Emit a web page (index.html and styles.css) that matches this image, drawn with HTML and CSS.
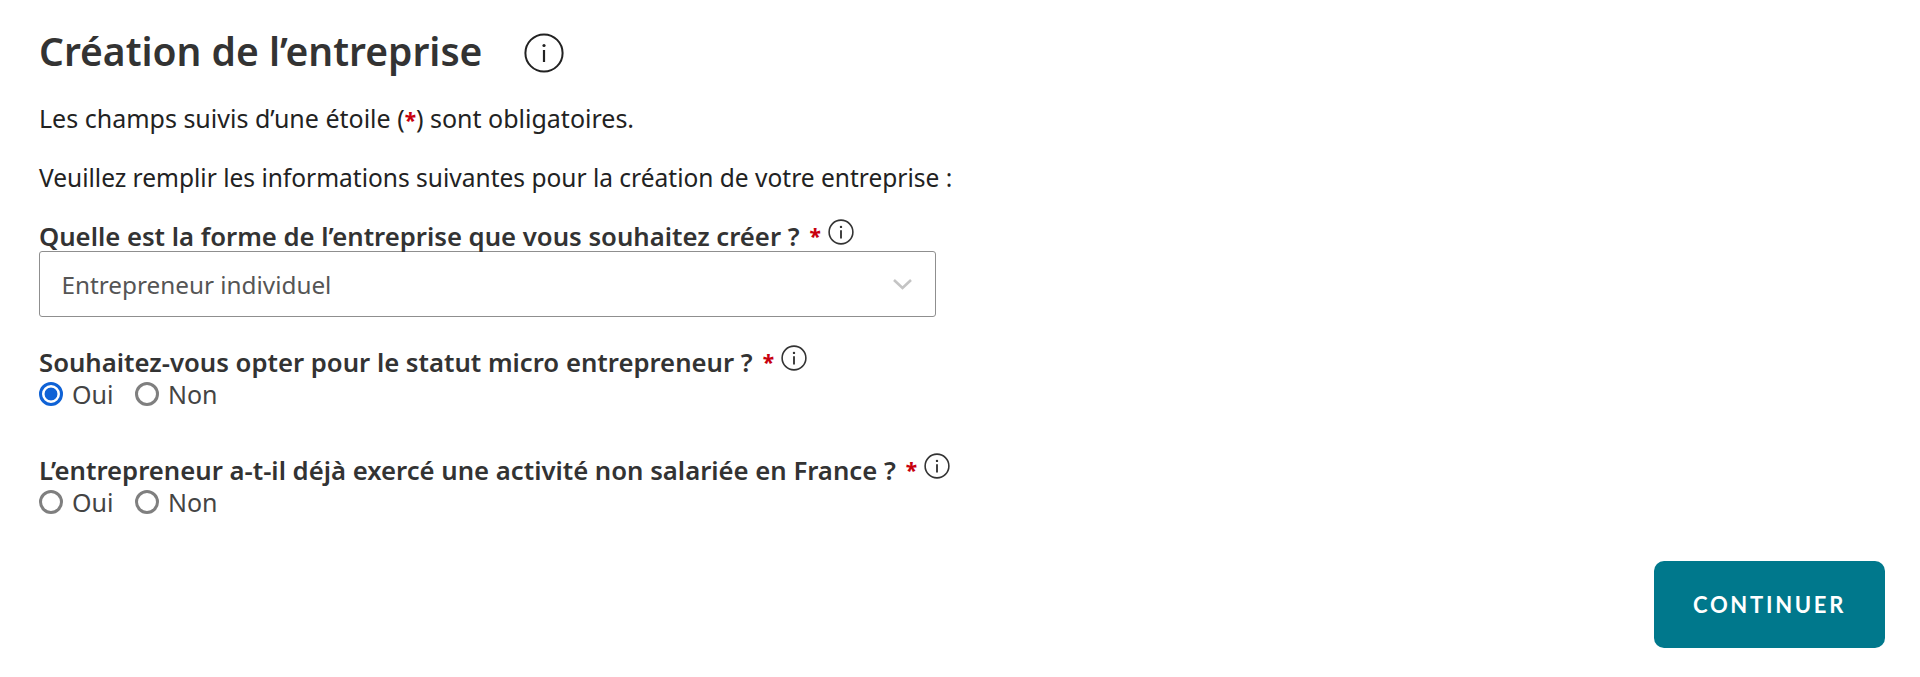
FILE: index.html
```html
<!DOCTYPE html>
<html lang="fr">
<head>
<meta charset="utf-8">
<title>Création de l’entreprise</title>
<link rel="stylesheet" href="styles.css">
</head>
<body>
<main class="page">
  <div class="title-row">
    <h1 class="title">Création de l’entreprise</h1>
    <svg class="info info-lg" viewBox="0 0 40 40" aria-hidden="true"><circle cx="20" cy="20" r="18.6" fill="none" stroke="#222" stroke-width="2"/><path d="M20 17v12" stroke="#222" stroke-width="2.2" fill="none"/><circle cx="20" cy="12.5" r="1.6" fill="#222"/></svg>
  </div>
  <p class="text first">Les champs suivis d’une étoile (<span class="req">*</span>) sont obligatoires.</p>
  <p class="text second">Veuillez remplir les informations suivantes pour la création de votre entreprise :</p>

  <section class="field q1">
    <div class="label-row"><span class="label">Quelle est la forme de l’entreprise que vous souhaitez créer ?</span><span class="req">*</span>
      <svg class="info info-sm" viewBox="0 0 28 28" aria-hidden="true"><circle cx="14" cy="14" r="12.8" fill="none" stroke="#333" stroke-width="1.7"/><path d="M14 12v9" stroke="#333" stroke-width="2" fill="none"/><circle cx="14" cy="8.5" r="1.3" fill="#333"/></svg>
    </div>
    <div class="select"><span>Entrepreneur individuel</span>
      <svg class="chevron" viewBox="0 0 20 12" aria-hidden="true"><path d="M1.5 2l8.5 8 8.5-8" fill="none" stroke="#c4c4c4" stroke-width="2.6"/></svg>
    </div>
  </section>

  <section class="field q2">
    <div class="label-row"><span class="label">Souhaitez-vous opter pour le statut micro entrepreneur ?</span><span class="req">*</span>
      <svg class="info info-sm" viewBox="0 0 28 28" aria-hidden="true"><circle cx="14" cy="14" r="12.8" fill="none" stroke="#333" stroke-width="1.7"/><path d="M14 12v9" stroke="#333" stroke-width="2" fill="none"/><circle cx="14" cy="8.5" r="1.3" fill="#333"/></svg>
    </div>
    <div class="radios">
      <label class="radio"><span class="dot on"></span>Oui</label>
      <label class="radio"><span class="dot"></span>Non</label>
    </div>
  </section>

  <section class="field q3">
    <div class="label-row"><span class="label">L’entrepreneur a-t-il déjà exercé une activité non salariée en France ?</span><span class="req">*</span>
      <svg class="info info-sm" viewBox="0 0 28 28" aria-hidden="true"><circle cx="14" cy="14" r="12.8" fill="none" stroke="#333" stroke-width="1.7"/><path d="M14 12v9" stroke="#333" stroke-width="2" fill="none"/><circle cx="14" cy="8.5" r="1.3" fill="#333"/></svg>
    </div>
    <div class="radios">
      <label class="radio"><span class="dot"></span>Oui</label>
      <label class="radio"><span class="dot"></span>Non</label>
    </div>
  </section>

  <div class="actions"><button class="btn" type="button">CONTINUER</button></div>
</main>
</body>
</html>
```

FILE: styles.css
```css
html, body { margin: 0; padding: 0; background: #fff; }
body { font-family: "Noto Sans", "Open Sans", sans-serif; color: #222; height: 677px; overflow: hidden; }
.page { padding: 26px 35px 0 39px; }
.title-row { display: flex; align-items: center; gap: 42px; height: 52px; }
.title { margin: 0 0 2px; font-size: 39px; font-weight: 600; line-height: 52px; color: #333; }
.info { display: block; flex: none; }
.info-lg { width: 40px; height: 40px; margin-top: 2px; }
.info-sm { width: 26px; height: 26px; margin-left: 7px; position: relative; top: -4px; }
.text { margin: 0; font-size: 24.5px; line-height: 32px; color: #222; }
.first { margin-top: 24px; font-size: 25px; }
.second { margin-top: 26px; }
.req { color: #c8000f; font-weight: 800; font-size: 21px; }
.q1 { margin-top: 27px; }
.label-row { display: flex; align-items: center; height: 30px; font-size: 25.7px; font-weight: 600; color: #333; }
.label-row .req { margin-left: 10px; }
.select { box-sizing: border-box; width: 897px; height: 66px; display: flex; align-items: center; justify-content: space-between; padding: 0 22px 0 21.5px; border: 1.5px solid #8f8f8f; border-radius: 3px; font-size: 24.3px; color: #555; }
.chevron { width: 21px; height: 12px; display: block; }
.q2 { margin-top: 30px; }
.q3 { margin-top: 44px; }
.radios { display: flex; gap: 21.5px; height: 34px; align-items: center; font-size: 25px; color: #444; }
.radio { display: flex; align-items: center; gap: 9px; }
.dot { box-sizing: border-box; width: 24px; height: 24px; border-radius: 50%; border: 3px solid #7f7f7f; background: #fff; display: block; }
.dot.on { border-color: #0f62d6; background: radial-gradient(circle, #0f62d6 0 6px, #fff 6.8px); }
.actions { display: flex; justify-content: flex-end; margin-top: 42px; }
.btn { width: 231px; height: 87px; border: 0; border-radius: 10px; background: #00788c; color: #fff; font-family: "Lato", sans-serif; font-weight: 700; font-size: 22px; letter-spacing: 2.7px; }
```
